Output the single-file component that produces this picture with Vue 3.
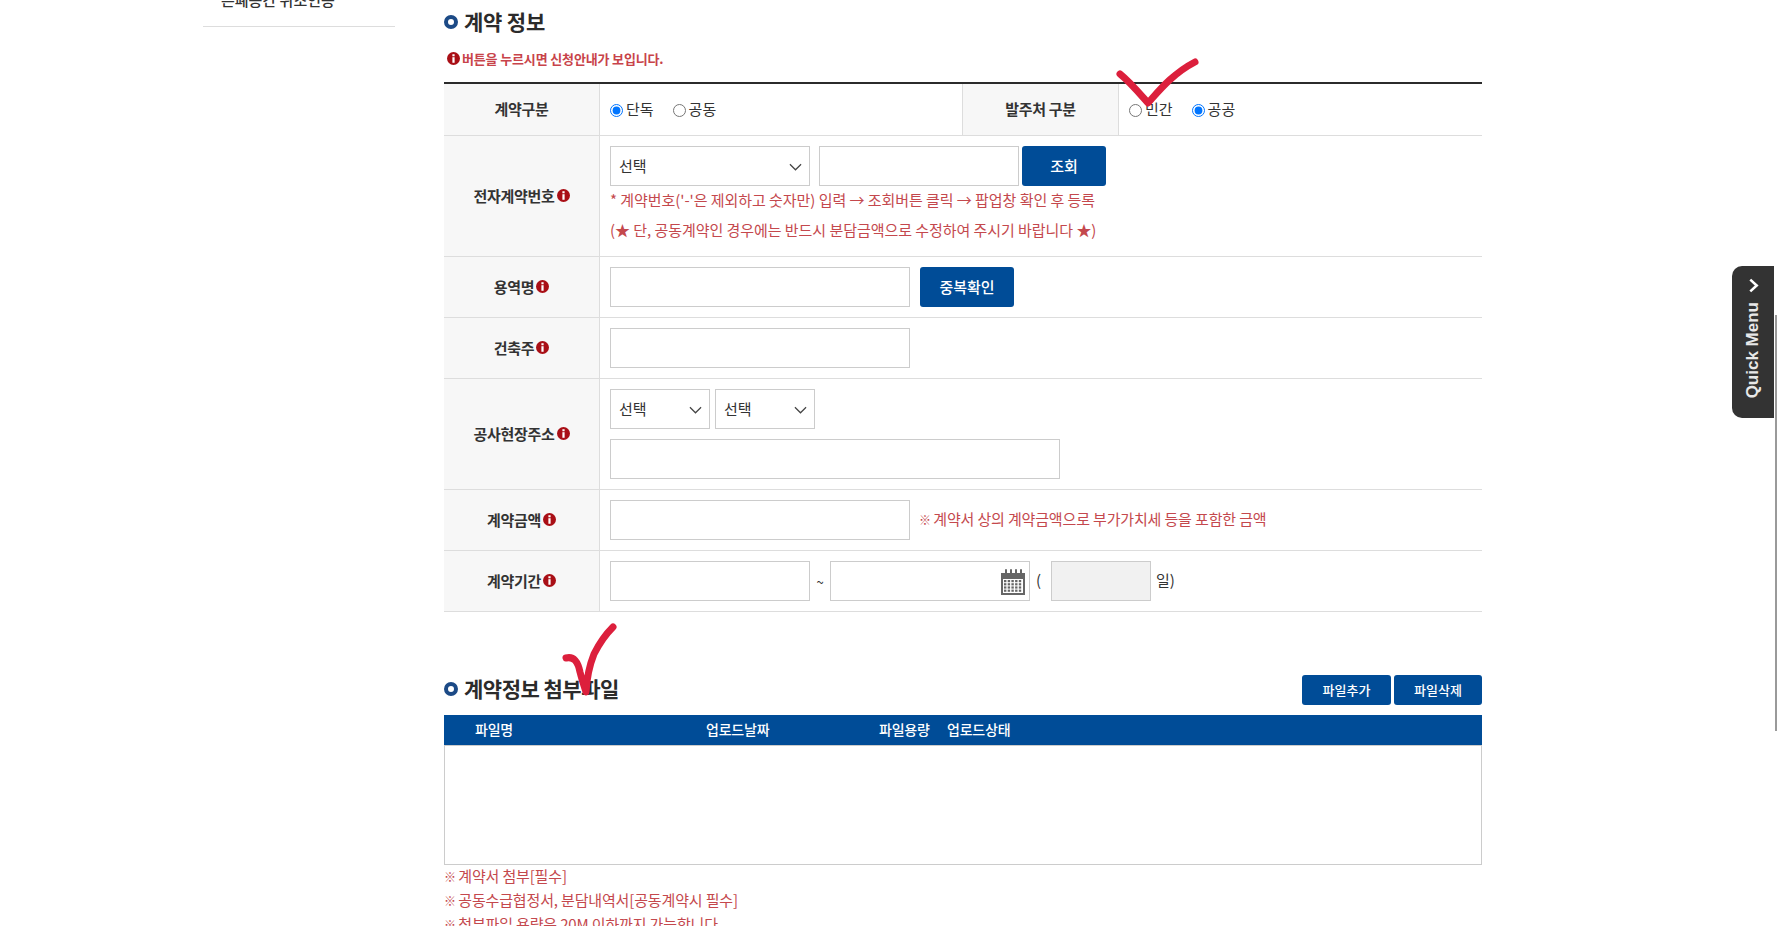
<template>
  <div class="page">
    <svg class="defs" aria-hidden="true">
      <symbol id="info" viewBox="0 0 14 14">
        <circle cx="7" cy="7" r="7" fill="#a90f16" />
        <rect x="5.8" y="2.4" width="2.4" height="2.2" fill="#fff" />
        <rect x="5.8" y="5.6" width="2.4" height="6" fill="#fff" />
      </symbol>
      <symbol id="chev" viewBox="0 0 14 8">
        <path d="M1 1l6 6 6-6" fill="none" stroke="#444" stroke-width="1.3" />
      </symbol>
    </svg>

    <aside class="side">
      <div class="side-item">은폐공간 위조인증</div>
    </aside>

    <main class="content">
      <h2 class="title"><i class="ring"></i>계약 정보</h2>
      <p class="hint"><svg class="ico"><use href="#info" /></svg>버튼을 누르시면 신청안내가 보입니다.</p>

      <div class="form">
        <div class="row row-first">
          <div class="label">계약구분</div>
          <div class="cell radios mid">
            <label><input type="radio" name="kind" checked />단독</label>
            <label><input type="radio" name="kind" />공동</label>
          </div>
          <div class="label label-mid">발주처 구분</div>
          <div class="cell radios">
            <label><input type="radio" name="client" />민간</label>
            <label><input type="radio" name="client" checked />공공</label>
          </div>
        </div>

        <div class="row">
          <div class="label">전자계약번호<svg class="ico"><use href="#info" /></svg></div>
          <div class="cell stack">
            <div class="line">
              <div class="sel w200"><select><option>선택</option></select><svg class="arrow"><use href="#chev" /></svg></div>
              <input class="inp w200" type="text" />
              <button class="btn btn-look" type="button">조회</button>
            </div>
            <p class="note two">* 계약번호('-'은 제외하고 숫자만) 입력 → 조회버튼 클릭 → 팝업창 확인 후 등록<br />(★ 단, 공동계약인 경우에는 반드시 분담금액으로 수정하여 주시기 바랍니다 ★)</p>
          </div>
        </div>

        <div class="row">
          <div class="label">용역명<svg class="ico"><use href="#info" /></svg></div>
          <div class="cell line">
            <input class="inp w300" type="text" />
            <button class="btn btn-dup" type="button">중복확인</button>
          </div>
        </div>

        <div class="row">
          <div class="label">건축주<svg class="ico"><use href="#info" /></svg></div>
          <div class="cell line"><input class="inp w300" type="text" /></div>
        </div>

        <div class="row">
          <div class="label">공사현장주소<svg class="ico"><use href="#info" /></svg></div>
          <div class="cell stack gap10">
            <div class="line tight">
              <div class="sel w100"><select><option>선택</option></select><svg class="arrow"><use href="#chev" /></svg></div>
              <div class="sel w100"><select><option>선택</option></select><svg class="arrow"><use href="#chev" /></svg></div>
            </div>
            <input class="inp w450" type="text" />
          </div>
        </div>

        <div class="row">
          <div class="label">계약금액<svg class="ico"><use href="#info" /></svg></div>
          <div class="cell line">
            <input class="inp w300" type="text" />
            <span class="note single"><b class="mark">※</b> 계약서 상의 계약금액으로 부가가치세 등을 포함한 금액</span>
          </div>
        </div>

        <div class="row">
          <div class="label">계약기간<svg class="ico"><use href="#info" /></svg></div>
          <div class="cell line period">
            <input class="inp w200" type="text" />
            <span class="tilde">~</span>
            <div class="date">
              <input class="inp w200" type="text" />
              <svg class="cal" viewBox="0 0 24 26">
                <path d="M0 4h24v22H0z" fill="#666" />
                <path d="M2 10h20v14H2z" fill="#fff" />
                <rect x="4" y="0" width="2" height="7" rx="1" fill="#666" />
                <rect x="9" y="0" width="2" height="7" rx="1" fill="#666" />
                <rect x="14" y="0" width="2" height="7" rx="1" fill="#666" />
                <rect x="19" y="0" width="2" height="7" rx="1" fill="#666" />
                <g fill="#666">
                  <template v-for="r in 4" :key="r">
                    <rect v-for="c in 5" :key="c" :x="c * 3.7 - 0.7" :y="7.8 + r * 3.2" width="2.4" height="2.2" />
                  </template>
                </g>
              </svg>
            </div>
            <span class="paren">(</span>
            <input class="inp w100 off" type="text" disabled />
            <span class="days">일)</span>
          </div>
        </div>
      </div>

      <div class="file-head">
        <h2 class="title title-sm"><i class="ring"></i>계약정보 첨부파일</h2>
        <div class="file-btns">
          <button class="btn btn-sm" type="button">파일추가</button>
          <button class="btn btn-sm btn-del" type="button">파일삭제</button>
        </div>
      </div>

      <div class="file-cols">
        <span>파일명</span>
        <span>업로드날짜</span>
        <span>파일용량</span>
        <span>업로드상태</span>
      </div>
      <div class="file-box"></div>

      <ul class="file-notes">
        <li v-for="n in notes" :key="n"><b class="mark">※</b> {{ n }}</li>
      </ul>
    </main>

    <div class="quick">
      <svg class="quick-arrow" viewBox="0 0 10 14"><path d="M2 1.500L8 7l-6 5.500" fill="none" stroke="#fff" stroke-width="2.400" /></svg>
      <span class="quick-text">Quick Menu</span>
    </div>
    <div class="scroll-thumb"></div>

    <svg class="marks" viewBox="0 0 1777 926">
      <path d="M1120 74C1130 82 1140 94 1148 103C1158 92 1172 74 1195 62" />
      <path d="M566 658C574 656 578 662 580 672C582 680 584 686 586 692C587 676 590 664 594 654C600 642 606 634 613 627" />
    </svg>
  </div>
</template>

<script setup>
const notes = [
  '계약서 첨부[필수]',
  '공동수급협정서, 분담내역서[공동계약시 필수]',
  '첨부파일 용량은 20M 이하까지 가능합니다'
];
</script>

<style>
html, body {
  margin: 0;
  height: 100%;
  overflow: hidden;
  background: #fff;
}
</style>

<style scoped>
.page {
  display: flex;
  gap: 49px;
  padding-left: 203px;
  height: 926px;
  overflow: hidden;
  font-family: "Noto Sans CJK KR", "Noto Sans", sans-serif;
  color: #333;
  font-size: 15px;
}
.defs {
  position: absolute;
  width: 0;
  height: 0;
}
.side {
  width: 192px;
  flex: none;
}
.side-item {
  margin-top: -12px;
  padding: 0 0 14px 18px;
  line-height: 24px;
  font-weight: 500;
  border-bottom: 1px solid #ddd;
}
.content {
  width: 1038px;
  flex: none;
}
.title {
  display: flex;
  align-items: center;
  gap: 6px;
  box-sizing: border-box;
  margin: 0;
  height: 44px;
  padding-bottom: 2px;
  font-size: 21px;
  font-weight: 700;
  color: #2b2b2b;
  letter-spacing: -0.2px;
}
.title-sm {
  height: 30px;
  padding-bottom: 4px;
  letter-spacing: -0.5px;
}
.ring {
  width: 14px;
  height: 14px;
  box-sizing: border-box;
  margin-top: 2px;
  border: 4px solid #1c4a86;
  border-radius: 50%;
}
.hint {
  display: flex;
  align-items: center;
  gap: 2px;
  box-sizing: border-box;
  margin: 0 0 8px;
  padding: 0 0 2px 3px;
  height: 30px;
  font-size: 13px;
  font-weight: 700;
  color: #c8434a;
  letter-spacing: -0.15px;
}
.ico {
  width: 13px;
  height: 13px;
  flex: none;
}
.form {
  border-top: 2px solid #2b2b2b;
}
.row {
  display: grid;
  grid-template-columns: 156px 1fr;
  border-bottom: 1px solid #ddd;
}
.row-first {
  grid-template-columns: 156px 362px 157px 1fr;
  height: 52px;
  box-sizing: border-box;
}
.label {
  display: flex;
  align-items: center;
  justify-content: center;
  gap: 2px;
  padding-bottom: 2px;
  background: #f7f7f7;
  border-right: 1px solid #ddd;
  font-weight: 700;
  color: #333;
  letter-spacing: -0.3px;
}
.label-mid {
  border-left: 1px solid #ddd;
}
.cell {
  padding: 10px;
  min-width: 0;
}
.radios {
  display: flex;
  align-items: center;
  gap: 19px;
  padding: 0 10px;
}
.radios label {
  display: flex;
  align-items: center;
  gap: 3px;
  padding-bottom: 2px;
}
.radios input {
  margin: 3px 0 0;
  width: 13px;
  height: 13px;
}
.line {
  display: flex;
  align-items: center;
  gap: 9px;
}
.line.tight {
  gap: 5px;
}
.stack {
  display: flex;
  flex-direction: column;
  padding-bottom: 10px;
}
.gap10 {
  gap: 10px;
}
.inp,
.sel select {
  box-sizing: border-box;
  height: 40px;
  border: 1px solid #ccc;
  border-radius: 0;
  background: #fff;
  font: inherit;
  color: #333;
  outline: none;
}
.w100 { width: 100px; }
.w200 { width: 200px; }
.w300 { width: 300px; }
.w450 { width: 450px; }
.off {
  background: #f1f1f1;
}
.sel {
  position: relative;
  flex: none;
}
.sel select {
  width: 100%;
  padding: 0 8px 2px;
  appearance: none;
}
.arrow {
  position: absolute;
  right: 8px;
  top: 17px;
  width: 13px;
  height: 8px;
  pointer-events: none;
}
.btn {
  height: 40px;
  padding: 0 0 2px;
  border: 0;
  border-radius: 3px;
  background: #004c97;
  color: #fff;
  font: inherit;
  font-size: 15px;
  font-weight: 500;
}
.btn-look {
  width: 84px;
  margin-left: -6px;
}
.btn-dup {
  width: 94px;
  margin-left: 1px;
}
.btn-sm {
  width: 89px;
  height: 30px;
  font-size: 13px;
}
.btn-del {
  width: 88px;
}
.note {
  margin: -1px 0 1px;
  color: #c4484d;
  font-size: 15px;
  letter-spacing: -0.05px;
}
.note.two {
  line-height: 30px;
}
.note.single {
  margin: 0;
  padding-bottom: 4px;
  letter-spacing: -0.15px;
}
.mark {
  font-size: 12px;
  font-weight: 700;
  letter-spacing: -1px;
}
.period {
  gap: 0;
}
.tilde {
  width: 20px;
  text-align: center;
  font-size: 13px;
}
.date {
  position: relative;
  height: 40px;
}
.cal {
  position: absolute;
  right: 5px;
  top: 8px;
  width: 24px;
  height: 26px;
}
.paren {
  width: 21px;
  padding: 0 0 3px 6px;
  box-sizing: border-box;
}
.days {
  margin-left: 5px;
  padding-bottom: 3px;
}
.file-head {
  display: flex;
  align-items: center;
  justify-content: space-between;
  margin-top: 63px;
  height: 30px;
  margin-bottom: 10px;
}
.file-btns {
  display: flex;
  gap: 3px;
}
.file-cols {
  position: relative;
  display: grid;
  grid-template-columns: 231px 173px 68px 1fr;
  align-items: center;
  box-sizing: border-box;
  height: 30px;
  padding: 0 0 2px 31px;
  background: #004c97;
  color: #fff;
  font-size: 14px;
  font-weight: 500;
  letter-spacing: -0.2px;
}
.file-box {
  box-sizing: border-box;
  height: 120px;
  border: 1px solid #ccc;
}
.file-notes {
  list-style: none;
  margin: -1px 0 0;
  padding: 0;
  color: #c4484d;
  font-size: 15px;
  line-height: 23px;
  letter-spacing: -0.15px;
}
.quick {
  position: absolute;
  left: 1732px;
  top: 266px;
  width: 42px;
  height: 152px;
  display: flex;
  flex-direction: column;
  align-items: center;
  gap: 9px;
  padding-top: 12px;
  box-sizing: border-box;
  background: #333;
  border-radius: 10px 0 0 10px;
}
.quick-arrow {
  width: 11px;
  height: 15px;
}
.quick-text {
  writing-mode: vertical-rl;
  transform: rotate(180deg);
  font-family: "Liberation Sans", Arial, sans-serif;
  font-weight: 700;
  font-size: 17px;
  color: #e8e8e8;
}
.scroll-thumb {
  position: absolute;
  left: 1775px;
  top: 315px;
  width: 2px;
  height: 416px;
  background: #9a9a9a;
}
.marks {
  position: absolute;
  left: 0;
  top: 0;
  width: 1777px;
  height: 926px;
  pointer-events: none;
}
.marks path {
  fill: none;
  stroke: #dc1f3c;
  stroke-width: 7;
  stroke-linecap: round;
  stroke-linejoin: round;
}
</style>
